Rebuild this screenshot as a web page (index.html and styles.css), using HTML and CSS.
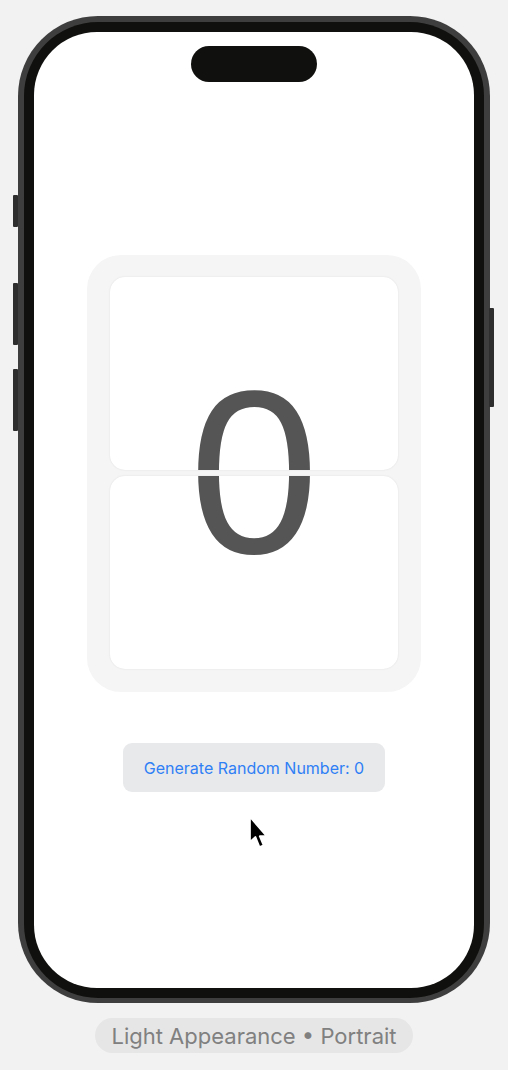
FILE: index.html
```html
<!DOCTYPE html>
<html>
<head>
<meta charset="utf-8">
<link rel="stylesheet" href="styles.css">
</head>
<body>
<div class="stage">
  <div class="device">
    <span class="btn btn-action"></span>
    <span class="btn btn-vol-up"></span>
    <span class="btn btn-vol-down"></span>
    <span class="btn btn-power"></span>
    <div class="bezel">
      <div class="screen">
        <div class="island"></div>
        <div class="flip-card">
          <div class="panel panel-top"><div class="digit">0</div></div>
          <div class="panel panel-bottom"><div class="digit">0</div></div>
        </div>
        <div class="action">Generate Random Number: 0</div>
        <svg class="cursor" width="24" height="36" viewBox="0 0 24 36">
          <path d="M2 2 L2 27 L7.5 22 L11.5 32 L15.6 30.3 L11.7 21.2 L18.6 21.2 Z" fill="#000" stroke="#fff" stroke-width="1.7" stroke-linejoin="round"/>
        </svg>
      </div>
    </div>
  </div>
  <div class="caption">Light Appearance • Portrait</div>
</div>
</body>
</html>
```

FILE: styles.css
```css
html, body {
  margin: 0;
  padding: 0;
  background: #f2f2f2;
}

.stage {
  width: 508px;
  height: 1070px;
  display: flex;
  flex-direction: column;
  align-items: flex-start;
  padding-top: 16px;
  box-sizing: border-box;
}

.device {
  position: relative;
  margin-left: 18px;
  width: 472px;
  height: 987px;
  box-sizing: border-box;
  padding: 6px 6px 5px 6px;
  border-radius: 80px;
  background: #3e3e3e;
}

.btn {
  position: absolute;
  width: 5px;
  background: #2e2e2e;
  border-radius: 1px;
}
.btn-action { left: -5px; top: 179px; height: 32px; }
.btn-vol-up { left: -5px; top: 267px; height: 62px; }
.btn-vol-down { left: -5px; top: 353px; height: 62px; }
.btn-power { right: -4px; top: 292px; height: 99px; }

.bezel {
  height: 100%;
  box-sizing: border-box;
  padding: 10px;
  border-radius: 74px;
  background: #10110e;
}

.screen {
  position: relative;
  height: 100%;
  border-radius: 63px;
  background: #ffffff;
  display: flex;
  flex-direction: column;
  align-items: center;
  overflow: hidden;
}

.island {
  margin-top: 14px;
  width: 126px;
  height: 36px;
  border-radius: 18px;
  background: #10110e;
}

.flip-card {
  margin-top: 173px;
  width: 334px;
  height: 437px;
  box-sizing: border-box;
  padding: 22px 23px 23px 23px;
  border-radius: 34px;
  background: #f5f5f5;
  display: flex;
  flex-direction: column;
  gap: 6px;
}

.panel {
  flex: 1;
  background: #ffffff;
  border-radius: 15px;
  box-shadow: 0 0 2px rgba(0, 0, 0, 0.10);
  overflow: hidden;
  display: flex;
  flex-direction: column;
}

.panel-top {
  justify-content: flex-end;
}
.panel-top .digit {
  margin-bottom: -203px;
}

.panel-bottom {
  justify-content: flex-start;
}
.panel-bottom .digit {
  margin-top: -204px;
}

.digit {
  flex: none;
  height: 400px;
  line-height: 400px;
  text-align: center;
  font-family: "Liberation Sans", Arial, sans-serif;
  font-size: 234px;
  color: #555555;
}

.action {
  margin-top: 51px;
  width: 262px;
  height: 49px;
  border-radius: 9px;
  background: #e8e9eb;
  color: #2f7ff5;
  font-family: "Inter", "Liberation Sans", sans-serif;
  font-size: 16px;
  display: flex;
  align-items: center;
  justify-content: center;
}

.cursor {
  position: absolute;
  left: 214px;
  top: 783px;
}

.caption {
  align-self: center;
  margin-top: 15px;
  height: 35px;
  padding: 0 16px;
  border-radius: 18px;
  background: #e6e6e6;
  color: #808080;
  font-family: "Inter", "Liberation Sans", sans-serif;
  font-size: 22px;
  display: flex;
  align-items: center;
}
```
